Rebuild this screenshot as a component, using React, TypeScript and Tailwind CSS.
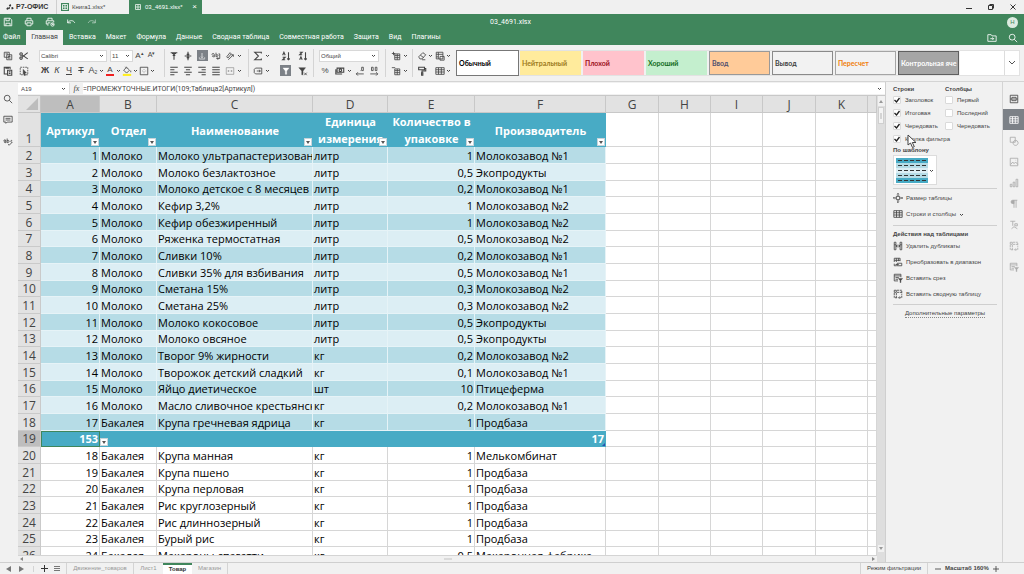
import React, { useState } from 'react';
import clsx from 'clsx';

const columns = [
  { name: 'A', width: 'w-[59px]' },
  { name: 'B', width: 'w-[57px]' },
  { name: 'C', width: 'w-[156px]' },
  { name: 'D', width: 'w-[75px]' },
  { name: 'E', width: 'w-[87px]' },
  { name: 'F', width: 'w-[131px]' },
  { name: 'G', width: 'w-[53px]' },
  { name: 'H', width: 'w-[52px]' },
  { name: 'I', width: 'w-[52px]' },
  { name: 'J', width: 'w-[53px]' },
  { name: 'K', width: 'w-[52px]' },
  { name: '', width: '' },
];

const headers = ['Артикул', 'Отдел', 'Наименование', 'Единица\nизмерения', 'Количество в\nупаковке', 'Производитель'];

const goods = [
  ['1', 'Молоко', 'Молоко ультрапастеризован', 'литр', '1', 'Молокозавод №1'],
  ['2', 'Молоко', 'Молоко безлактозное', 'литр', '0,5', 'Экопродукты'],
  ['3', 'Молоко', 'Молоко детское с 8 месяцев', 'литр', '0,2', 'Молокозавод №1'],
  ['4', 'Молоко', 'Кефир 3,2%', 'литр', '1', 'Молокозавод №2'],
  ['5', 'Молоко', 'Кефир обезжиренный', 'литр', '1', 'Молокозавод №2'],
  ['6', 'Молоко', 'Ряженка термостатная', 'литр', '0,5', 'Молокозавод №2'],
  ['7', 'Молоко', 'Сливки 10%', 'литр', '0,2', 'Молокозавод №1'],
  ['8', 'Молоко', 'Сливки 35% для взбивания', 'литр', '0,5', 'Молокозавод №1'],
  ['9', 'Молоко', 'Сметана 15%', 'литр', '0,3', 'Молокозавод №2'],
  ['10', 'Молоко', 'Сметана 25%', 'литр', '0,3', 'Молокозавод №2'],
  ['11', 'Молоко', 'Молоко кокосовое', 'литр', '0,5', 'Экопродукты'],
  ['12', 'Молоко', 'Молоко овсяное', 'литр', '0,5', 'Экопродукты'],
  ['13', 'Молоко', 'Творог 9% жирности', 'кг', '0,2', 'Молокозавод №2'],
  ['14', 'Молоко', 'Творожок детский сладкий', 'кг', '0,1', 'Молокозавод №1'],
  ['15', 'Молоко', 'Яйцо диетическое', 'шт', '10', 'Птицеферма'],
  ['16', 'Молоко', 'Масло сливочное крестьянск', 'кг', '0,2', 'Молокозавод №1'],
  ['17', 'Бакалея', 'Крупа гречневая ядрица', 'кг', '1', 'Продбаза'],
  ['153', '', '', '', '', '17'],
  ['18', 'Бакалея', 'Крупа манная', 'кг', '1', 'Мелькомбинат'],
  ['19', 'Бакалея', 'Крупа пшено', 'кг', '1', 'Продбаза'],
  ['20', 'Бакалея', 'Крупа перловая', 'кг', '1', 'Продбаза'],
  ['21', 'Бакалея', 'Рис круглозерный', 'кг', '1', 'Продбаза'],
  ['22', 'Бакалея', 'Рис длиннозерный', 'кг', '1', 'Продбаза'],
  ['23', 'Бакалея', 'Бурый рис', 'кг', '1', 'Продбаза'],
  ['24', 'Бакалея', 'Макароны спагетти', 'кг', '0,5', 'Макаронная фабрика'],
];

const TOTAL_ROW = 17;

// every icon is drawn on a 12x12 grid
const icons: Record<string, React.ReactNode> = {
  save: <path d="M1.5 1.5h7l2 2v7h-9zM3.5 1.5v3h4v-3M3.5 10.5v-3h5v3" />,
  print: <path d="M3.5 4V1.5h5V4M3 8.5H1.5v-4h9v4H9M3.5 7h5v3.5h-5z" />,
  quickPrint: <path d="M3.5 4V1.5h5V4M3 8.5H1.5v-4h9v2M3.5 10.5V7h3M8.5 7v2h2M11 9a2 2 0 1 1-4 0 2 2 0 0 1 4 0" />,
  undo: <path d="M2 3v4h4M2 7c2-3.500 7-3.500 8.500 0" />,
  redo: <path d="M10 3v4H6M10 7C8 3.500 3 3.500 1.500 7" />,
  copy: <path d="M1.500 1.500h6v6h-6zM4.500 4.500h6v6h-6zM6 6.500h3M6 8.500h3M3 3.500h3" />,
  paste: <path d="M5 9.500H1.500v-8h7V4M3.500 1.500h3v1h-3zM5.500 5h5v6h-5zM7 7h2M7 9h2" strokeWidth="1.300" />,
  cut: <path d="M10.500 2 4 7M10.500 9.500 4 5M4 3.500a1.500 1.500 0 1 1-3 0 1.500 1.500 0 0 1 3 0M4 8.500a1.500 1.500 0 1 1-3 0 1.500 1.500 0 0 1 3 0" strokeWidth="1.300" />,
  selectAll: <><path d="M1.500 1.500h9v9h-9z" strokeDasharray="2 1" /><path d="m5 4 4 4.500H7l1 2.500-1.500.5-.8-2.500L5 10z" fill="currentColor" strokeWidth="0.500" /></>,
  alignTop: <path d="M2 2h8M6 10.500V4M4.500 5.500 6 4l1.500 1.500M3.500 3h5" strokeWidth="1.300" />,
  alignMid: <path d="M2 6h8M6 1v3.500M6 7.500V11M4.500 3.500 6 5l1.500-1.500M4.500 8.500 6 7l1.500 1.500" strokeWidth="1.300" />,
  alignBottom: <path d="M2 10.500h8M6 1.500v7M4.500 7 6 8.500 7.500 7M2 10v-2M10 10v-2" />,
  wrap: <path d="M1 4.500c0-2 3-2 3 0V7c-3 0-3-1.500-1-1.500M6 2v5M6 5c3-2 3.500 2 0 2M9 3.500h1.500V9H7M8.500 7.500 7 9l1.500 1.500" />,
  orient: <path d="m2 7 4-5 1.500 1.500-4 5zM4 10.500l6-6M10 7V4.500H7.500" />,
  left: <path d="M1.500 1.500h9M1.500 4.500h5M1.500 7.500h9M1.500 10.500h5" strokeWidth="1.300" />,
  center: <path d="M1.500 1.500h9M3.500 4.500h5M1.500 7.500h9M3.500 10.500h5" strokeWidth="1.300" />,
  right: <path d="M1.500 1.500h9M5.500 4.500h5M1.500 7.500h9M5.500 10.500h5" strokeWidth="1.300" />,
  justify: <path d="M1.500 1.500h9M1.500 4.500h9M1.500 7.500h9M1.500 10.500h9" strokeWidth="1.300" />,
  merge: <path d="M1.500 2h9v8h-9zM3 6h2M9 6H7M4 5l1 1-1 1M8 5 7 6l1 1" opacity="0.450" />,
  sum: <path d="M10 3V1.500H2L6.500 6 2 10.500h8V9" strokeWidth="1.300" />,
  named: <path d="M1.500 4v4l1.500 1.500h7.500v-7H3zM4.500 6H6M7.500 4.500v3M6.500 6h3" />,
  sortAsc: <path d="M2 5 3.500 1.500 5 5M2 7.500h3l-3 3h3M9 1.500v9M7.500 9 9 10.500 10.500 9" strokeWidth="1.300" />,
  sortDesc: <path d="M2 1.500h3l-3 3h3M2 10.500 3.500 7 5 10.500M9 1.500v9M7.500 9 9 10.500 10.500 9" strokeWidth="1.300" />,
  filter: <path d="M1.500 1.500h9L7 6v5H5V6z" fill="currentColor" strokeWidth="0.500" />,
  clearFilter: <><path d="M1 2h8L6 6v4.500H4.500V6z" fill="currentColor" strokeWidth="0.500" /><path d="m7.500 8 3 3M10.500 8l-3 3" /></>,
  currency: <path d="M2.500 2.500h8v5h-8zM1 4v5.500h7.500M6.500 3.500a1.500 1.500 0 1 0 0 3 1.500 1.500 0 0 0 0-3" strokeWidth="1.300" />,
  decLess: <path d="M8 1.500h2v4H8zM6 5.500h.5M1.500 9.500h9M3.500 7.500l-2 2 2 2" />,
  decMore: <path d="M3 1.500h2v4H3zM7.500 1.500h2v4h-2zM1.500 9.500h9M8.500 7.500l2 2-2 2" />,
  insCell: <path d="M4.500 3.500h6v7h-6zM4.500 5.500h6M4.500 8h6M7.500 3.500v7M1 3h4M3 1v4" />,
  delCell: <path d="M4.500 3.500h6v7h-6zM4.500 5.500h6M4.500 8h6M7.500 3.500v7M1 2h4" />,
  eraser: <path d="m2 7 5-5 3.500 2.500-4.500 5H3.500zM4 5l4 3M6 10.500h4" />,
  cond: <path d="M1.500 1.500h8v8h-8zM1.500 4h8M4 1.500v8M1.500 7H4M6 6.500h5v4.500H6z" />,
  painter: <path d="M2 1.500h7v3H2zM9 3h1.500v3H6v2M5.500 8h1.500v3H5.500z" strokeWidth="1.300" />,
  table: <path d="M1 2h10v8H1zM1 4.500h10M1 7.200h10M4.200 2v8M7.600 2v8" />,
  borders: <path d="M1.500 1.500h9v9h-9zM6 4v.5M6 6v.5M6 8v.5M4 6h.5M8 6h.5" />,
  search: <path d="M8.500 5a3.500 3.500 0 1 1-7 0 3.500 3.500 0 0 1 7 0M7.500 7.500 11 11" />,
  comment: <path d="M1 1.500h10v7H5L3.500 10V8.500H1zM3 4h6M3 6h6" />,
  spell: <path d="M1 6c0-2 2.500-2 2.500 0v2C.5 8 .5 6 3.500 6M5 3v5c3 .5 3-4 0-2.500M11 5.500c-2-1-2.500 2 0 2M6 10l1.500 1L11 7.500" />,
  folder: <path d="M1 2h4l1 1.500h5V10H1zM4 6.800h4M6.500 5.300 8 6.800 6.500 8.300" />,
  cellSet: <path d="M1.500 1.500h9v9h-9zM3.500 4h5v4h-5zM1.500 6h2M8.500 6h2M4 6h4" />,
  shape: <path d="M1.500 1.500h6v6h-6zM10.800 7.500A3 3 0 1 1 5 7.500a3 3 0 0 1 5.800 0" />,
  image: <path d="M1.500 1.500h9v9h-9zM2 9l2.500-3L6 8l2-2 2.500 3M8 3.500v.5" />,
  chart: <path d="M1.500 7.500h2v3h-2zM5 5h2v5.500H5zM8.500 1.500h2v9h-2z" />,
  para: <><path d="M6 1.500H4.500a2 2 0 0 0 0 4H6z" fill="currentColor" /><path d="M6 1.500v9M8.500 1.500v9M6 1.500h4" /></>,
  textArt: <path d="M1.500 1.500h6M4.500 1.500V7M7 4.500h3V7H7zM3 10.500 6 8l4 2.500" />,
  pivot: <path d="M1.500 1.500h9V7M1.500 1.500v9H5M1.500 4h9M4 1.500v9M10.500 8v2.500H7M8 9l-1.500 1.500L8 12" strokeDasharray="2.500 0.800" />,
  slicer: <><path d="M6 9.500H1.500v-8h8V5M1.500 3.500h8M3 5.500h4M3 7.500h3" /><path d="M6.500 6.500h5L9.500 9v2.500h-1V9z" fill="currentColor" strokeWidth="0.500" /></>,
  resize: <path d="M4 4h4v4H4zM6 .5V4M6 8v3.500M.5 6H4M8 6h3.500M5 1.500l1-1 1 1M5 10.500l1 1 1-1M1.500 5l-1 1 1 1M10.500 5l1 1-1 1" />,
  dupes: <path d="M1.500 1.500h2v9h-2zM8.500 1.500h2v9h-2zM4 6h4M5 4.500 3.500 6 5 7.500M7 4.500 8.500 6 7 7.500M1.500 4.500h2M8.500 4.500h2" />,
  convert: <path d="M1.500 6V1.500h7V5M1.500 4h7M4 1.500V6M6.500 1.500V5M1.500 8v2.500h3M5 7.500h5.500v3H5zM3 9h4" />,
};

function Icon({ name, className = 'size-[10px]' }: { name: string; className?: string }) {
  return (
    <svg viewBox="0 0 12 12" fill="none" stroke="currentColor" className={clsx('shrink-0', className)} aria-hidden="true">
      {icons[name]}
    </svg>
  );
}

function BookIcon({ className }: { className: string }) {
  return (
    <svg viewBox="0 0 8 8" fill="none" className={clsx('size-[8px] shrink-0', className)} aria-hidden="true">
      <path d="M0 0h8v8H0z" fill="#40865c" />
      <path d="M1.500 1.500h5v5h-5zM4 1.500v5M1.500 4h5" stroke="#fff" strokeWidth="0.800" />
    </svg>
  );
}

function Caret() {
  return (
    <svg viewBox="0 0 5 5" fill="none" stroke="currentColor" className="size-[5px] shrink-0" aria-hidden="true">
      <path d="M1 2l1.500 1.500L4 2" />
    </svg>
  );
}

type ToolProps = { icon?: string; label: string; menu?: boolean; active?: boolean; width?: string; children?: React.ReactNode };

function Tool({ icon, label, menu, active, width = 'w-[14px]', children }: ToolProps) {
  return (
    <button type="button" aria-label={label} className="flex h-[15px] shrink-0 items-center text-[#444]">
      <span className={clsx('flex items-center justify-center', width)}>
        <span className={clsx('flex size-[11px] items-center justify-center', active && 'bg-[#7c8187] text-white')}>
          {icon ? <Icon name={icon} className={active ? 'size-[8px]' : 'size-[10px]'} /> : children}
        </span>
      </span>
      {menu && <Caret />}
    </button>
  );
}

function Combo({ label, value, width }: { label: string; value: string; width: string }) {
  return (
    <span className={clsx('relative flex h-[12px] items-center border border-[#d8d8d8] bg-white text-[#444]', width)}>
      <select aria-label={label} className="w-full appearance-none bg-transparent pl-px text-[6px] leading-[10px] outline-none">
        <option>{value}</option>
      </select>
      <span className="pointer-events-none absolute right-[2px]"><Caret /></span>
    </span>
  );
}

const Divider = () => <div className="my-px w-px shrink-0 bg-[#d4d4d4]" />;

function TitleBar() {
  return (
    <div className="flex h-[14px] shrink-0 items-center bg-[#f0f0f0] text-[6px] text-[#444]">
      <div className="flex h-full w-[57px] items-center gap-[2px] border-r border-[#cfcfcf] pl-[6px] text-[7px] font-bold text-[#333]">
        <svg viewBox="0 0 12 10" className="h-[6px] w-[8px]" fill="#333" aria-hidden="true">
          <path d="M4 2l3-2 1 3-2 2zM0 7l3-2 1 3-3 2zM8 6l3-1 1 3-3 1zM4 6l2-1v2l-2 2z" />
        </svg>
        Р7-ОФИС
      </div>
      <button type="button" className="flex h-full w-[72px] items-center gap-[3px] pl-[4px]">
        <BookIcon className="" />
        Книга1.xlsx*
      </button>
      <div className="flex h-full w-[73px] items-center justify-between bg-[#40865c] px-[5px] text-white">
        <button type="button" className="flex items-center gap-[3px]">
          <BookIcon className="opacity-90" />
          03_4691.xlsx*
        </button>
        <button type="button" aria-label="Закрыть вкладку" className="text-[8px] leading-none">×</button>
      </div>
      <div className="ml-auto flex h-full items-center gap-[16px] pr-[8px] text-[#333]">
        <button type="button" aria-label="Свернуть"><svg viewBox="0 0 6 6" className="size-[6px]" stroke="currentColor"><path d="M0 4.500h6" /></svg></button>
        <button type="button" aria-label="Развернуть"><svg viewBox="0 0 6 6" className="size-[6px]" fill="none" stroke="currentColor"><path d="M.5 1.500h4v4h-4zM1.500.5h4v4" /></svg></button>
        <button type="button" aria-label="Закрыть"><svg viewBox="0 0 6 6" className="size-[6px]" stroke="currentColor"><path d="M.5.5l5 5M5.500.5l-5 5" /></svg></button>
      </div>
    </div>
  );
}

function Header() {
  const tabs = ['Вставка', 'Макет', 'Формула', 'Данные', 'Сводная таблица', 'Совместная работа', 'Защита', 'Вид', 'Плагины'];
  return (
    <header className="shrink-0 bg-[#40865c] text-white">
      <div className="flex h-[16px] items-center px-[2px]">
        <div className="flex flex-1 items-center gap-[11px] pl-px">
          <button type="button" aria-label="Сохранить"><Icon name="save" /></button>
          <button type="button" aria-label="Печать"><Icon name="print" /></button>
          <button type="button" aria-label="Быстрая печать"><Icon name="quickPrint" /></button>
          <button type="button" aria-label="Отменить"><Icon name="undo" /></button>
          <button type="button" aria-label="Повторить" className="opacity-60"><Icon name="redo" /></button>
        </div>
        <div className="text-center font-[Roboto,sans-serif] text-[7px] leading-[9px]">03_4691.xlsx</div>
        <div className="flex flex-1 justify-end pr-[4px]">
          <button type="button" className="size-[11px] rounded-full bg-[#dcebe0] text-[6px] leading-[11px] text-[#40865c]">Н</button>
        </div>
      </div>
      <nav className="flex h-[15px] items-center font-[Roboto,sans-serif] text-[7px]">
        <button type="button" className="w-[26px] pl-[3px] text-left">Файл</button>
        <button type="button" className="h-full w-[37px] bg-[#f1f1f1] text-[#444]">Главная</button>
        <div className="flex gap-[10px] pl-[6px]">
          {tabs.map((tab) => (
            <button type="button" key={tab}>{tab}</button>
          ))}
        </div>
        <div className="ml-auto flex gap-[11px] pr-[6px]">
          <button type="button" aria-label="Открыть расположение"><Icon name="folder" /></button>
          <button type="button" aria-label="Поиск"><Icon name="search" /></button>
        </div>
      </nav>
    </header>
  );
}

const cellStyles = [
  { name: 'Обычный', look: 'bg-white text-black outline outline-[#777]' },
  { name: 'Нейтральный', look: 'bg-[#ffeb9c] text-[#9c7a20]' },
  { name: 'Плохой', look: 'bg-[#ffc3cc] text-[#9c1020]' },
  { name: 'Хороший', look: 'bg-[#c4efce] text-[#136c20]' },
  { name: 'Ввод', look: 'border border-[#999] bg-[#ffcb99] text-[#51516f]' },
  { name: 'Вывод', look: 'border border-[#8a8a8a] bg-[#f2f2f2] text-[#3f3f3f]' },
  { name: 'Пересчет', look: 'border border-[#a5a5a5] bg-[#f2f2f2] text-[#f0800c]' },
  { name: 'Контрольная яче', look: 'border border-[#5f5f5f] bg-[#a5a5a5] text-white' },
];

function Toolbar() {
  return (
    <div className="flex h-[37px] shrink-0 border-b border-[#d4d4d4] bg-[#f1f1f1] py-[3px] pr-[4px]">
      <div className="mr-[7px] grid grid-cols-2">
        <Tool icon="copy" label="Копировать" width="w-[16px]" />
        <Tool icon="cut" label="Вырезать" width="w-[16px]" />
        <Tool icon="paste" label="Вставить" width="w-[16px]" />
        <Tool icon="selectAll" label="Выделить все" width="w-[16px]" />
      </div>
      <div className="mr-[7px]">
        <div className="flex h-[15px] items-center">
          <span className="mr-[3px] flex"><Combo label="Шрифт" value="Calibri" width="w-[68px]" /></span>
          <Combo label="Размер шрифта" value="11" width="w-[23px]" />
          <Tool label="Увеличить шрифт" width="w-[13px]"><span className="text-[8px]">A<sup className="text-[5px]">▴</sup></span></Tool>
          <Tool label="Уменьшить шрифт" width="w-[11px]"><span className="text-[7px]">A<sup className="text-[5px]">▾</sup></span></Tool>
        </div>
        <div className="flex text-[9px]">
          <Tool label="Полужирный" width="w-[12px]"><b>Ж</b></Tool>
          <Tool label="Курсив" width="w-[12px]"><i>К</i></Tool>
          <Tool label="Подчеркнутый" width="w-[12px]"><u>Ч</u></Tool>
          <Tool label="Зачеркнутый" width="w-[12px]"><s>Т</s></Tool>
          <Tool label="Подстрочный" width="w-[12px]" menu>A<sub className="text-[5px]">2</sub></Tool>
          <Tool label="Цвет шрифта" width="w-[12px]" menu><span className="h-[10px] border-b-2 border-[#f02020] px-px text-[8px] leading-[8px]">A</span></Tool>
          <Tool label="Цвет заливки" width="w-[12px]" menu>
            <svg viewBox="0 0 12 12" className="size-[10px]" fill="none" stroke="currentColor" aria-hidden="true">
              <path d="M2 5l3.500-3.500L9 5 5.500 8.500zM4 1l2 2M10.500 5.500v2" />
              <path d="M1 10.700h10" stroke="#ffee20" strokeWidth="2.500" />
            </svg>
          </Tool>
          <Tool icon="borders" label="Границы" width="w-[12px]" menu />
        </div>
      </div>
      <Divider />
      <div className="mr-[6px] ml-[2px]">
        <div className="flex">
          <Tool icon="alignTop" label="По верхнему краю" />
          <Tool icon="alignMid" label="По середине" />
          <Tool icon="alignBottom" label="По нижнему краю" active />
          <Tool icon="wrap" label="Перенос текста" />
          <Tool icon="orient" label="Ориентация" menu />
        </div>
        <div className="flex">
          <Tool icon="left" label="По левому краю" />
          <Tool icon="center" label="По центру" />
          <Tool icon="right" label="По правому краю" />
          <Tool icon="justify" label="По ширине" />
          <Tool icon="merge" label="Объединить" menu />
        </div>
      </div>
      <Divider />
      <div className="mr-[7px] ml-[2px]">
        <Tool icon="sum" label="Сумма" menu />
        <Tool icon="named" label="Именованные диапазоны" menu />
      </div>
      <div className="mr-[2px] grid grid-cols-2">
        <Tool icon="sortAsc" label="По возрастанию" width="w-[17px]" />
        <Tool icon="sortDesc" label="По убыванию" width="w-[17px]" />
        <Tool icon="filter" label="Фильтр" width="w-[17px]" active />
        <Tool icon="clearFilter" label="Очистить фильтр" width="w-[17px]" />
      </div>
      <Divider />
      <div className="mr-[5px] ml-[5px] w-[61px]">
        <div className="flex h-[15px] items-center">
          <Combo label="Числовой формат" value="Общий" width="w-[60px]" />
        </div>
        <div className="flex justify-between">
          <Tool label="Процентный стиль" width="w-[12px]"><span className="text-[8px]">%</span></Tool>
          <Tool icon="currency" label="Денежный стиль" menu />
          <Tool icon="decLess" label="Уменьшить разрядность" width="w-[12px]" />
          <Tool icon="decMore" label="Увеличить разрядность" width="w-[12px]" />
        </div>
      </div>
      <Divider />
      <div className="mr-[4px] ml-[3px]">
        <Tool icon="insCell" label="Вставить ячейки" menu />
        <Tool icon="delCell" label="Удалить ячейки" menu />
      </div>
      <Divider />
      <div className="mr-[5px] ml-[2px] grid grid-cols-2">
        <Tool icon="eraser" label="Очистить" width="w-[13px]" menu />
        <Tool icon="cond" label="Условное форматирование" width="w-[13px]" menu />
        <Tool icon="painter" label="Формат по образцу" width="w-[13px]" />
        <Tool icon="table" label="Форматировать как таблицу" width="w-[13px]" menu />
      </div>
      <div className="my-[2px] flex min-w-0 flex-1 border border-[#e2e2e2] bg-white font-[Lato,sans-serif] text-[7px] font-bold">
        <div className="flex gap-[2px] bg-[#f1f1f1] pr-px">
          {cellStyles.map((style) => (
            <button type="button" key={style.name} className={clsx('w-[61px] shrink-0 overflow-hidden pl-[2px] text-left whitespace-nowrap', style.look)}>
              {style.name}
            </button>
          ))}
        </div>
        <button type="button" aria-label="Другие стили" className="ml-auto flex w-[15px] items-center justify-center border-l border-[#ddd] text-[#555]">
          <svg viewBox="0 0 8 6" className="h-[6px] w-[8px]" fill="none" stroke="currentColor" aria-hidden="true"><path d="M1 1l3 3 3-3" /></svg>
        </button>
      </div>
    </div>
  );
}

function FormulaBar() {
  return (
    <div className="flex h-[14px] shrink-0 items-center border-b border-[#c8c8c8] bg-[#f1f1f1] text-[6px] text-[#444]">
      <input aria-label="Имя ячейки" defaultValue="A19" className="h-[11px] w-[43px] bg-white pl-[3px] outline-none" />
      <span className="flex h-[11px] w-[9px] items-center border-r border-[#ddd] bg-white"><Caret /></span>
      <span className="w-[13px] text-center font-['Liberation_Serif',serif] text-[8px] italic">fx</span>
      <input aria-label="Формула" defaultValue="=ПРОМЕЖУТОЧНЫЕ.ИТОГИ(109;Таблица2[Артикул])" className="h-[11px] min-w-0 flex-1 bg-white font-[Roboto,sans-serif] text-[7px] outline-none" />
      <span className="flex h-[11px] w-[8px] items-center bg-white"><Caret /></span>
    </div>
  );
}

function FilterButton({ className }: { className: string }) {
  return (
    <button type="button" aria-label="Фильтр" className={clsx('absolute flex size-[8px] items-center justify-center border border-[#c8d4da] bg-white', className)}>
      <svg viewBox="0 0 4 3" className="h-[3px] w-[4px]" fill="#555" aria-hidden="true"><path d="M0 0h4L2 3z" /></svg>
    </button>
  );
}

function rowColor(index: number) {
  if (index === TOTAL_ROW) return 'bg-[#48abc5] font-bold text-white';
  if (index > TOTAL_ROW) return 'bg-white';
  return index % 2 === 0 ? 'bg-[#b6dce6]' : 'bg-[#dceef4]';
}

function cellBorder(index: number) {
  if (index === TOTAL_ROW) return 'border-[#48abc5]';
  if (index > TOTAL_ROW) return 'border-[#d6d6d6]';
  return 'border-[#e6f3f7]';
}

function Sheet() {
  return (
    <div className="min-h-0 flex-1 overflow-hidden bg-white">
      <table className="w-full table-fixed border-separate border-spacing-0 font-['Open_Sans','Noto_Sans',sans-serif] text-[11px] leading-[15px] text-black">
        <thead className="text-[12px] text-[#444]">
          <tr className="h-[17px] bg-[#e2e2e2]">
            <th className="relative w-[23px] border-r border-b border-[#c4c4c4]" aria-label="Выделить все">
              <svg viewBox="0 0 12 12" className="absolute right-[2px] bottom-[2px] size-[12px]" fill="#bdbdbd" aria-hidden="true"><path d="M12 0v12H0z" /></svg>
            </th>
            {columns.map((col) => (
              <th key={col.name} className={clsx('border-r border-b border-[#c8c8c8] p-0 font-normal', col.width, col.name === 'A' && 'bg-[#bebebe]')}>
                {col.name}
              </th>
            ))}
          </tr>
        </thead>
        <tbody>
          <tr className="h-[34px]">
            <th className="border-r border-b border-[#cacaca] bg-[#e2e2e2] p-0 align-bottom text-[12px] font-normal text-[#444]">1</th>
            {headers.map((title) => (
              <th key={title} className="relative bg-[#48abc5] p-0 leading-[17px] font-bold whitespace-pre text-white">
                {title}
                <FilterButton className="right-[1px] bottom-[1px]" />
              </th>
            ))}
            {columns.slice(6).map((col) => (
              <td key={col.name} className="border-r border-b border-[#d6d6d6]" />
            ))}
          </tr>
          {goods.map((row, index) => (
            <tr key={row[0]} className={index % 3 === 2 ? 'h-[16px]' : 'h-[17px]'}>
              <th className={clsx('border-r border-b border-[#cacaca] p-0 text-[12px] font-normal text-[#444]', index === TOTAL_ROW ? 'bg-[#bebebe]' : 'bg-[#e2e2e2]')}>
                {index + 2}
              </th>
              {row.map((value, col) => {
                const selected = index === TOTAL_ROW && col === 0;
                const numeric = col === 0 || col === 4 || index === TOTAL_ROW;
                return (
                  <td
                    key={col}
                    className={clsx(
                      'relative border-r border-b py-0 whitespace-nowrap',
                      numeric ? 'pr-px text-right' : 'pl-px text-left',
                      rowColor(index),
                      cellBorder(index),
                      selected ? 'z-10 outline outline-[#3f865c] -outline-offset-1' : 'overflow-hidden',
                    )}
                  >
                    {value}
                    {selected && <FilterButton className="-right-[9px] bottom-0" />}
                    {index === TOTAL_ROW && col === 5 && (
                      <svg viewBox="0 0 3 3" className="absolute right-0 bottom-0 size-[3px]" fill="#2a4fb0" aria-hidden="true"><path d="M3 0v3H0z" /></svg>
                    )}
                  </td>
                );
              })}
              {columns.slice(6).map((col) => (
                <td key={col.name} className="border-r border-b border-[#d6d6d6] p-0" />
              ))}
            </tr>
          ))}
        </tbody>
      </table>
    </div>
  );
}

function Check({ label, checked }: { label: string; checked?: boolean }) {
  const [on, setOn] = useState(!!checked);
  return (
    <label className="flex h-[13px] items-center gap-[4px] whitespace-nowrap">
      <span className="relative flex size-[8px] items-center justify-center">
        <input type="checkbox" checked={on} onChange={() => setOn(!on)} className="size-[8px] appearance-none rounded-[1px] border border-[#dadada] bg-white" />
        {on && <svg viewBox="0 0 8 8" className="pointer-events-none absolute size-[8px]" fill="none" stroke="#222" strokeWidth="1.300" aria-hidden="true"><path d="M1.500 4l2 2L6.500 2" /></svg>}
      </span>
      {label}
    </label>
  );
}

function PanelAction({ icon, label, menu }: { icon: string; label: string; menu?: boolean }) {
  return (
    <button type="button" className="flex h-[16px] items-center gap-[3px] whitespace-nowrap">
      <Icon name={icon} />
      {label}
      {menu && <Caret />}
    </button>
  );
}

function TablePanel() {
  return (
    <aside className="relative flex w-[117px] shrink-0 flex-col border-l border-[#cfcfcf] bg-[#f1f1f1] pt-[4px] pr-[5px] pl-[7px] text-[6px] leading-[8px] text-[#444]">
      <div className="flex">
        <div className="w-[52px]">
          <div className="leading-[7px] font-bold">Строки</div>
          <Check label="Заголовок" checked />
          <Check label="Итоговая" checked />
          <Check label="Чередовать" checked />
          <Check label="Кнопка фильтра" checked />
        </div>
        <div>
          <div className="leading-[7px] font-bold">Столбцы</div>
          <Check label="Первый" />
          <Check label="Последний" />
          <Check label="Чередовать" />
        </div>
      </div>
      <div className="mt-px font-bold">По шаблону</div>
      <button type="button" aria-label="Шаблон таблицы" className="mt-px flex h-[30px] w-[44px] items-center justify-between border border-[#dcdcdc] bg-white px-[2px]">
        <svg viewBox="0 0 32 25" className="h-[25px] w-[32px]" aria-hidden="true">
          <path d="M0 0h32v5H0zM0 20h32v5H0z" fill="#48abc5" />
          <path d="M0 5h32v5H0zM0 15h32v5H0z" fill="#b6dce6" />
          <path d="M0 10h32v5H0z" fill="#dceef4" />
          <path d="M2 2.500h28M2 22.500h28" stroke="#333" strokeDasharray="4 2" />
          <path d="M2 7.500h28M2 12.500h28M2 17.500h28" stroke="#333" strokeDasharray="4 2" />
        </svg>
        <Caret />
      </button>
      <div className="mt-[3px] flex flex-col border-t border-[#cfcfcf] pt-px pb-[3px]">
        <PanelAction icon="resize" label="Размер таблицы" />
        <PanelAction icon="table" label="Строки и столбцы" menu />
      </div>
      <div className="flex flex-col border-t border-[#cfcfcf] pt-[4px] pb-[2px]">
        <div className="font-bold">Действия над таблицами</div>
        <PanelAction icon="dupes" label="Удалить дубликаты" />
        <PanelAction icon="convert" label="Преобразовать в диапазон" />
        <PanelAction icon="slicer" label="Вставить срез" />
        <PanelAction icon="pivot" label="Вставить сводную таблицу" />
      </div>
      <div className="flex justify-center border-t border-[#cfcfcf] pt-[4px]">
        <a href="#advanced" className="border-b border-dotted border-[#888]">Дополнительные параметры</a>
      </div>
      <svg viewBox="0 0 10 15" className="pointer-events-none absolute top-[52px] left-[21px] h-[15px] w-[10px]" fill="#fff" stroke="#444" aria-hidden="true">
        <path d="M1 1v10l2.500-2 2 4.500 1.800-.8-2-4.200H9z" />
      </svg>
    </aside>
  );
}

function StatusBar() {
  return (
    <footer className="flex h-[12px] shrink-0 items-center border-t border-[#cfcfcf] bg-[#f1f1f1] text-[6px] text-[#444]">
      <div className="flex w-[34px] gap-[8px] border-r border-[#d4d4d4] pl-[6px] text-[#777]">
        <button type="button" aria-label="Предыдущий лист"><svg viewBox="0 0 5 6" className="h-[6px] w-[5px]" fill="currentColor"><path d="M5 0v6L0 3z" /></svg></button>
        <button type="button" aria-label="Следующий лист"><svg viewBox="0 0 5 6" className="h-[6px] w-[5px]" fill="currentColor"><path d="M0 0v6l5-3z" /></svg></button>
      </div>
      <div className="flex w-[32px] items-center justify-center gap-[6px] text-[#333]">
        <button type="button" aria-label="Добавить лист"><svg viewBox="0 0 7 7" className="size-[7px]" stroke="currentColor"><path d="M3.500 0v7M0 3.500h7" /></svg></button>
        <button type="button" aria-label="Список листов" className="text-[#777]"><svg viewBox="0 0 6 7" className="h-[7px] w-[6px]" stroke="currentColor"><path d="M0 1.500h6M0 3.500h6M0 5.500h6" /></svg></button>
      </div>
      <button type="button" className="h-full w-[68px] border-x border-[#d4d4d4] text-[#999]">Движение_товаров</button>
      <button type="button" className="h-full w-[29px] text-[#999]">Лист1</button>
      <button type="button" className="h-full w-[29px] border-t-2 border-[#40865c] bg-white font-bold text-[#333]">Товар</button>
      <button type="button" className="h-full w-[36px] border-r border-[#d4d4d4] text-[#999]">Магазин</button>
      <div className="ml-auto flex h-full w-[68px] items-center justify-center border-x border-[#d4d4d4]">Режим фильтрации</div>
      <div className="flex w-[96px] items-center gap-[4px] pl-[7px] font-bold">
        <button type="button" aria-label="Уменьшить масштаб"><svg viewBox="0 0 7 7" className="size-[6px]" stroke="currentColor"><path d="M0 3.500h7" /></svg></button>
        <span>Масштаб 160%</span>
        <button type="button" aria-label="Увеличить масштаб"><svg viewBox="0 0 7 7" className="size-[6px]" stroke="currentColor"><path d="M3.500 0v7M0 3.500h7" /></svg></button>
      </div>
    </footer>
  );
}

export default function App() {
  const sideTabs = ['cellSet', 'table', 'shape', 'image', 'chart', 'para', 'textArt', 'pivot', 'slicer'];
  return (
    <div className="flex h-screen flex-col overflow-hidden bg-[#f1f1f1] font-['Liberation_Sans',Arial,sans-serif]">
      <TitleBar />
      <Header />
      <Toolbar />
      <div className="flex min-h-0 flex-1">
        <div className="flex w-[18px] shrink-0 flex-col items-center gap-[11px] pt-[12px] pr-[3px] text-[#444]">
          <button type="button" aria-label="Поиск"><Icon name="search" className="block size-[10px]" /></button>
          <button type="button" aria-label="Комментарии"><Icon name="comment" className="block size-[10px]" /></button>
          <button type="button" aria-label="Проверка орфографии"><Icon name="spell" className="block size-[10px]" /></button>
        </div>
        <main className="flex min-w-0 flex-1 flex-col">
          <FormulaBar />
          <div className="flex min-h-0 flex-1">
            <div className="flex min-w-0 flex-1 flex-col">
              <Sheet />
              <div className="flex h-[7px] shrink-0 items-center justify-between border-t border-[#d4d4d4] bg-[#f1f1f1] px-[2px] text-[#888]">
                <svg viewBox="0 0 3 4" className="h-[4px] w-[3px]" fill="currentColor" aria-hidden="true"><path d="M3 0v4L0 2z" /></svg>
                <span className="h-[2px] w-[8px] bg-[#dadada]" />
                <svg viewBox="0 0 3 4" className="h-[4px] w-[3px]" fill="currentColor" aria-hidden="true"><path d="M0 0v4l3-2z" /></svg>
              </div>
            </div>
            <div className="flex w-[8px] shrink-0 flex-col items-center bg-[#dedede] pb-[10px] text-[#999]">
              <span className="flex h-[10px] w-[7px] items-center justify-center bg-[#f1f1f1]"><svg viewBox="0 0 4 3" className="h-[3px] w-[4px]" fill="currentColor" aria-hidden="true"><path d="M0 3h4L2 0z" /></svg></span>
              <span className="mt-px flex h-[17px] w-[6px] items-center justify-center border border-[#cfcfcf] bg-[#f4f4f4]"><span className="h-[6px] w-[2px] bg-[#d4d4d4]" /></span>
              <span className="mt-auto flex h-[7px] w-[6px] items-center justify-center bg-[#f1f1f1]"><svg viewBox="0 0 4 3" className="h-[3px] w-[4px]" fill="currentColor" aria-hidden="true"><path d="M0 0h4L2 3z" /></svg></span>
            </div>
          </div>
        </main>
        <TablePanel />
        <div className="flex w-[22px] shrink-0 flex-col border-l border-[#d4d4d4] pt-[6px]">
          {sideTabs.map((name, i) => (
            <button
              type="button"
              key={name}
              aria-label={name}
              className={clsx('flex h-[21px] items-center justify-center', i === 0 && 'text-[#444]', i === 1 && 'bg-[#7c8187] text-white', i > 1 && 'text-[#aaa]')}
            >
              <Icon name={name} />
            </button>
          ))}
        </div>
      </div>
      <StatusBar />
    </div>
  );
}
